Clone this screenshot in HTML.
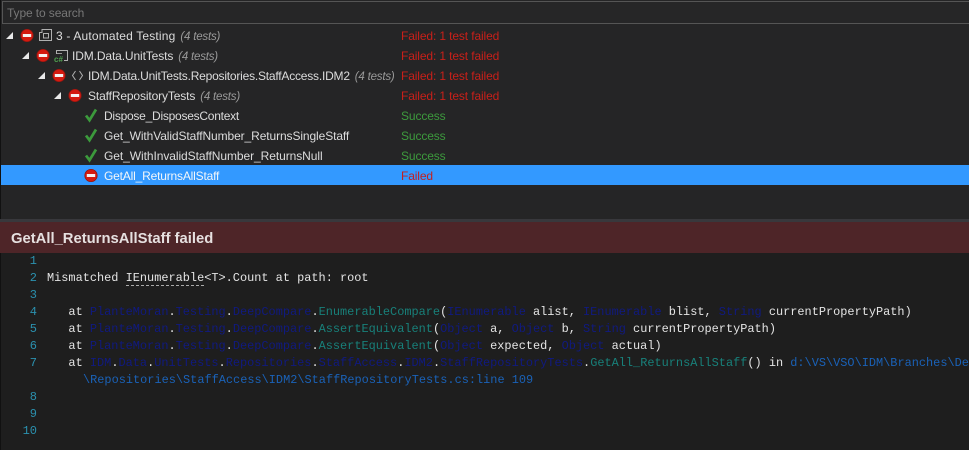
<!DOCTYPE html>
<html><head><meta charset="utf-8"><style>
*{box-sizing:border-box}
html,body{margin:0;padding:0;width:969px;height:450px;overflow:hidden;background:#1e1e1e}
.abs{position:absolute;white-space:pre}
#top{position:absolute;left:0;top:0;width:969px;height:219px;background:#252526;overflow:hidden}
.t{position:absolute;font:12px/20px "Liberation Sans",sans-serif;color:#dcdcdc;white-space:pre}
.t i{color:#9a9a9a;margin-left:5px;font-size:11.5px;letter-spacing:-.2px}
.s{position:absolute;left:401px;font:12px/20px "Liberation Sans",sans-serif;white-space:pre;letter-spacing:-.12px}
.r{color:#c8201a}.g{color:#3d9a3d}
.tri{position:absolute;width:0;height:0;border-style:solid;border-width:0 0 7px 7px;border-color:transparent transparent #e8e8e8 transparent}
.c{font:11.9px/17px "Liberation Mono",monospace;color:#e4e4e4;position:absolute;left:47px;white-space:pre;letter-spacing:.01px}
.n{font:12px/17px "Liberation Mono",monospace;color:#2b91af;position:absolute;left:7px;width:30px;text-align:right}
.b{color:#101a80}.e{color:#18807a}.u{color:#1a62b8}
</style></head><body>
<div id="top">
<div style="position:absolute;left:2px;top:1px;width:967px;height:23px;border:1px solid #555;border-right:0;background:#262627"></div>
<div class="t" style="left:7px;top:3px;color:#777;letter-spacing:-.11px">Type to search</div>
<div style="position:absolute;left:1px;top:165px;width:968px;height:20px;background:#3399ff"></div>
<div style="position:absolute;left:0;top:0;width:1px;height:219px;background:#111"></div>

<div class="tri" style="left:6px;top:32px"></div>
<div class="tri" style="left:22px;top:52px"></div>
<div class="tri" style="left:38px;top:72px"></div>
<div class="tri" style="left:54px;top:92px"></div>

<svg class="abs" style="left:0;top:0" width="300" height="190" viewBox="0 0 300 190">
<defs><g id="f"><circle r="6.4" fill="#d41a10"/><circle r="6.2" fill="none" stroke="#8c1610" stroke-width=".7"/><rect x="-4.2" y="-1.5" width="8.4" height="3" fill="#f5f0f0"/></g>
<path id="k" d="M-5 .5L-1.5 5.2L5 -5.5" fill="none" stroke="#3c9a3c" stroke-width="2.7"/></defs>
<use href="#f" x="27" y="35.5"/><use href="#f" x="43" y="55.5"/><use href="#f" x="59" y="75.5"/><use href="#f" x="75" y="95.5"/>
<use href="#k" x="91" y="115"/><use href="#k" x="91" y="135"/><use href="#k" x="91" y="155"/>
<use href="#f" x="91" y="175.5"/>
<g fill="none" stroke="#b0b0b0"><path d="M39.5 32.5H42V29.5H51.5V40.5H39.5Z"/><rect x="43.5" y="33.5" width="5" height="4.5"/></g>
<g fill="none" stroke="#b0b0b0"><path d="M56.5 54V50.5H67.5V60.5H64"/><path d="M57 53.5H62" stroke="#999"/></g>
<text x="54" y="62" font-family="Liberation Sans" font-size="8" font-weight="bold" fill="#4fa04f">c#</text>
<g fill="none" stroke="#b0b0b0"><path d="M75.5 71L72.5 75.5L75.5 80"/><path d="M79.5 71L82.5 75.5L79.5 80"/></g>
</svg>

<div class="t" style="left:56px;top:26px;letter-spacing:.17px">3 - Automated Testing<i>(4 tests)</i></div>
<div class="t" style="left:72px;top:46px;letter-spacing:-.12px">IDM.Data.UnitTests<i>(4 tests)</i></div>
<div class="t" style="left:88px;top:66px;letter-spacing:-.21px">IDM.Data.UnitTests.Repositories.StaffAccess.IDM2<i>(4 tests)</i></div>
<div class="t" style="left:88px;top:86px;letter-spacing:-.13px">StaffRepositoryTests<i>(4 tests)</i></div>
<div class="t" style="left:104px;top:106px;letter-spacing:-.25px">Dispose_DisposesContext</div>
<div class="t" style="left:104px;top:126px;letter-spacing:-.1px">Get_WithValidStaffNumber_ReturnsSingleStaff</div>
<div class="t" style="left:104px;top:146px;letter-spacing:-.07px">Get_WithInvalidStaffNumber_ReturnsNull</div>
<div class="t" style="left:104px;top:166px;letter-spacing:-.18px;color:#f2f6fa">GetAll_ReturnsAllStaff</div>

<div class="s r" style="top:26px">Failed: 1 test failed</div>
<div class="s r" style="top:46px">Failed: 1 test failed</div>
<div class="s r" style="top:66px">Failed: 1 test failed</div>
<div class="s r" style="top:86px">Failed: 1 test failed</div>
<div class="s g" style="top:106px">Success</div>
<div class="s g" style="top:126px">Success</div>
<div class="s g" style="top:146px">Success</div>
<div class="s" style="top:166px;color:#c3201f">Failed</div>
</div>

<div style="position:absolute;left:0;top:219px;width:969px;height:3px;background:#38383c"></div>
<div style="position:absolute;left:0;top:222px;width:969px;height:31px;background:#4e2528"></div>
<div class="abs" style="left:11px;top:230px;font:bold 14.8px/19px 'Liberation Sans',sans-serif;color:#e6e0e0">GetAll_ReturnsAllStaff failed</div>
<div style="position:absolute;left:0;top:253px;width:1px;height:197px;background:#111"></div>

<div class="n" style="top:253px">1</div>
<div class="n" style="top:270px">2</div>
<div class="n" style="top:287px">3</div>
<div class="n" style="top:304px">4</div>
<div class="n" style="top:321px">5</div>
<div class="n" style="top:338px">6</div>
<div class="n" style="top:355px">7</div>
<div class="n" style="top:389px">8</div>
<div class="n" style="top:406px">9</div>
<div class="n" style="top:423px">10</div>

<div class="c" style="top:270px">Mismatched <span style="border-bottom:1px dashed #aaa">IEnumerable</span>&lt;T&gt;.Count at path: root</div>
<div class="c" style="top:304px">   at <span class="b">PlanteMoran</span>.<span class="b">Testing</span>.<span class="b">DeepCompare</span>.<span class="e">EnumerableCompare</span>(<span class="b">IEnumerable</span> alist, <span class="b">IEnumerable</span> blist, <span class="b">String</span> currentPropertyPath)</div>
<div class="c" style="top:321px">   at <span class="b">PlanteMoran</span>.<span class="b">Testing</span>.<span class="b">DeepCompare</span>.<span class="e">AssertEquivalent</span>(<span class="b">Object</span> a, <span class="b">Object</span> b, <span class="b">String</span> currentPropertyPath)</div>
<div class="c" style="top:338px">   at <span class="b">PlanteMoran</span>.<span class="b">Testing</span>.<span class="b">DeepCompare</span>.<span class="e">AssertEquivalent</span>(<span class="b">Object</span> expected, <span class="b">Object</span> actual)</div>
<div class="c" style="top:355px">   at <span class="b">IDM</span>.<span class="b">Data</span>.<span class="b">UnitTests</span>.<span class="b">Repositories</span>.<span class="b">StaffAccess</span>.<span class="b">IDM2</span>.<span class="b">StaffRepositoryTests</span>.<span class="e">GetAll_ReturnsAllStaff</span>() in <span class="u">d:\VS\VSO\IDM\Branches\Dev</span></div>
<div class="c u" style="top:372px;left:83px">\Repositories\StaffAccess\IDM2\StaffRepositoryTests.cs:line 109</div>
</body></html>
